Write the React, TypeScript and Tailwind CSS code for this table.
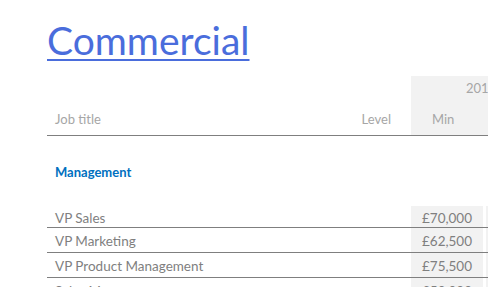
const rows = [
  { title: 'VP Sales', min: '£70,000' },
  { title: 'VP Marketing', min: '£62,500' },
  { title: 'VP Product Management', min: '£75,500' },
  { title: 'Sales Manager', min: '£50,000' },
];

export default function App() {
  return (
    <div className="w-[488px] h-[287px] overflow-hidden bg-white font-['Lato','Liberation_Sans',sans-serif]">
      <div className="pl-[47px] pt-[16px]">
        <h1 className="text-[39px] leading-[48px] text-[#4a6ddc] underline decoration-[2px] underline-offset-[4px]">
          Commercial
        </h1>
      </div>

      <div className="mt-[12px] ml-[47px]">
        {/* header */}
        <div className="flex h-[60px] border-b border-[#7f7f7f] text-[13px] text-[#a6a6a6]">
          <div className="flex-1 flex items-end pb-[6px] pl-[8px]">Job title</div>
          <div className="w-[80px] flex items-end justify-end pb-[6px] pr-[20px]">Level</div>
          <div className="w-[77px] bg-[#f2f2f2] flex flex-col">
            <div className="h-[26px] flex items-center pl-[55px]">2019</div>
            <div className="flex-1 flex items-end pb-[6px] pl-[21px]">Min</div>
          </div>
        </div>

        {/* section */}
        <div className="h-[70px] flex items-center pt-[4px] pl-[8px] text-[13px] font-bold text-[#0070c0]">
          Management
        </div>

        {rows.map((r, i) => (
          <div
            key={r.title}
            className={`flex text-[13.5px] text-[#7f7f7f] border-b border-[#7f7f7f] ${i === 0 ? 'h-[22px]' : 'h-[25px]'}`}
          >
            <div className="flex-1 flex items-center pt-[3px] pl-[8px]">{r.title}</div>
            <div className="w-[80px]" />
            <div className="w-[72px] bg-[#f2f2f2] flex items-center justify-center pt-[3px]">{r.min}</div>
            <div className="w-[3px]" />
            <div className="w-[2px] bg-[#f2f2f2]" />
          </div>
        ))}
      </div>
    </div>
  );
}
